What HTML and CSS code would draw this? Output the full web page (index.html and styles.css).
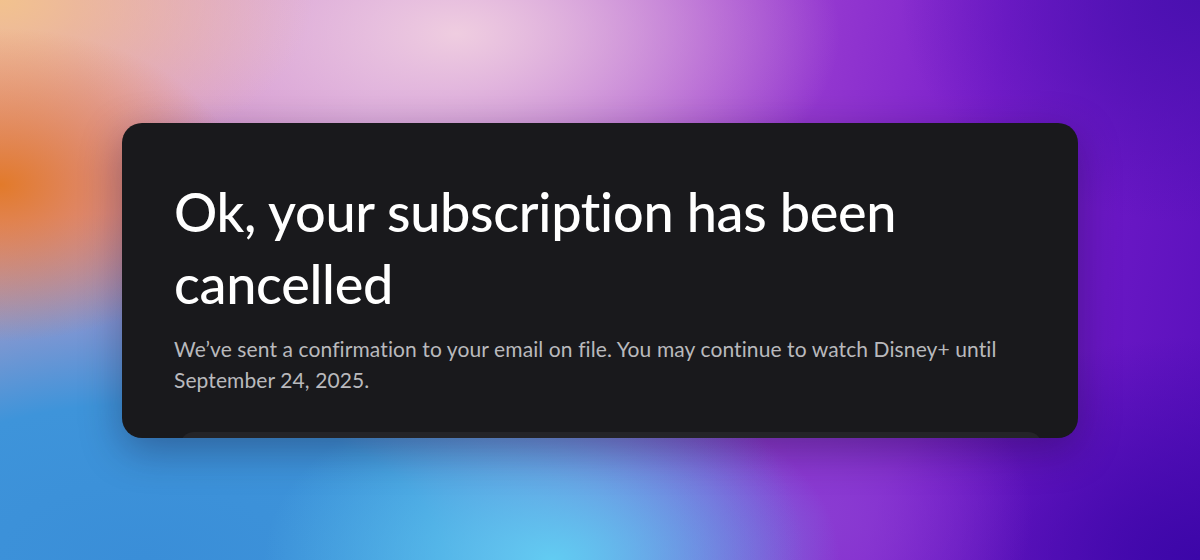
FILE: index.html
```html
<!DOCTYPE html>
<html lang="en">
<head>
  <meta charset="UTF-8">
  <meta name="viewport" content="width=device-width, initial-scale=1.0">
  <title>Subscription cancelled</title>
  <link rel="stylesheet" href="styles.css">
</head>
<body>

<div class="card">
  <h1>Ok, your subscription has been cancelled</h1>
  <p class="note">We’ve sent a confirmation to your email on file. You may continue to watch Disney+ until September 24, 2025.</p>
  <div class="next-panel"></div>
</div>

</body>
</html>
```

FILE: styles.css
```css
/* General Styles */
body {
  margin: 0;
  height: 100vh;
  font-family: 'Lato', 'Noto Sans', sans-serif;
  display: flex;
  justify-content: center;
  align-items: center;
  background:
    radial-gradient(ellipse 20% 28% at 0% 33%, #e27a2a 0%, rgba(226, 122, 42, 0) 100%),
    radial-gradient(ellipse 26% 32% at 0% 0%, #f2c28e 0%, rgba(242, 194, 142, 0) 100%),
    radial-gradient(ellipse 24% 32% at 46% 100%, #62ccf2 0%, rgba(98, 204, 242, 0) 100%),
    radial-gradient(ellipse 55% 62% at 12% 100%, #3a8ed8 0%, #3e94da 45%, rgba(62, 148, 218, 0) 100%),
    radial-gradient(ellipse 32% 38% at 38% 6%, #efcde0 0%, rgba(239, 205, 224, 0) 100%),
    radial-gradient(ellipse 18% 30% at 68% 92%, #8a3cd2 0%, rgba(138, 60, 210, 0) 100%),
    radial-gradient(ellipse 28% 40% at 100% 100%, #3c06a8 0%, rgba(60, 6, 168, 0) 100%),
    radial-gradient(ellipse 25% 40% at 100% 0%, #4a10b0 0%, rgba(74, 16, 176, 0) 100%),
    linear-gradient(100deg, #e0a0c0 0%, #c888d8 30%, #a448d2 55%, #7a1ecc 78%, #5810bc 100%);
}

.card {
  box-sizing: border-box;
  width: 956px;
  height: 315px;
  padding: 53px 0 0 52px;
  background: #19191c;
  border-radius: 20px;
  overflow: hidden;
  box-shadow: 0 12px 40px rgba(20, 10, 40, 0.35);
}

h1 {
  margin: 0;
  font-size: 54px;
  font-weight: 500;
  line-height: 72px;
  letter-spacing: -0.3px;
  color: #fff;
  max-width: 800px;
}

.note {
  margin: 13px 0 0;
  font-size: 21px;
  line-height: 31px;
  letter-spacing: 0.1px;
  color: #b9b9bd;
  max-width: 850px;
}

.next-panel {
  margin: 37px 36px 0 6px;
  height: 40px;
  background: #242428;
  border-radius: 14px 14px 0 0;
}
```
